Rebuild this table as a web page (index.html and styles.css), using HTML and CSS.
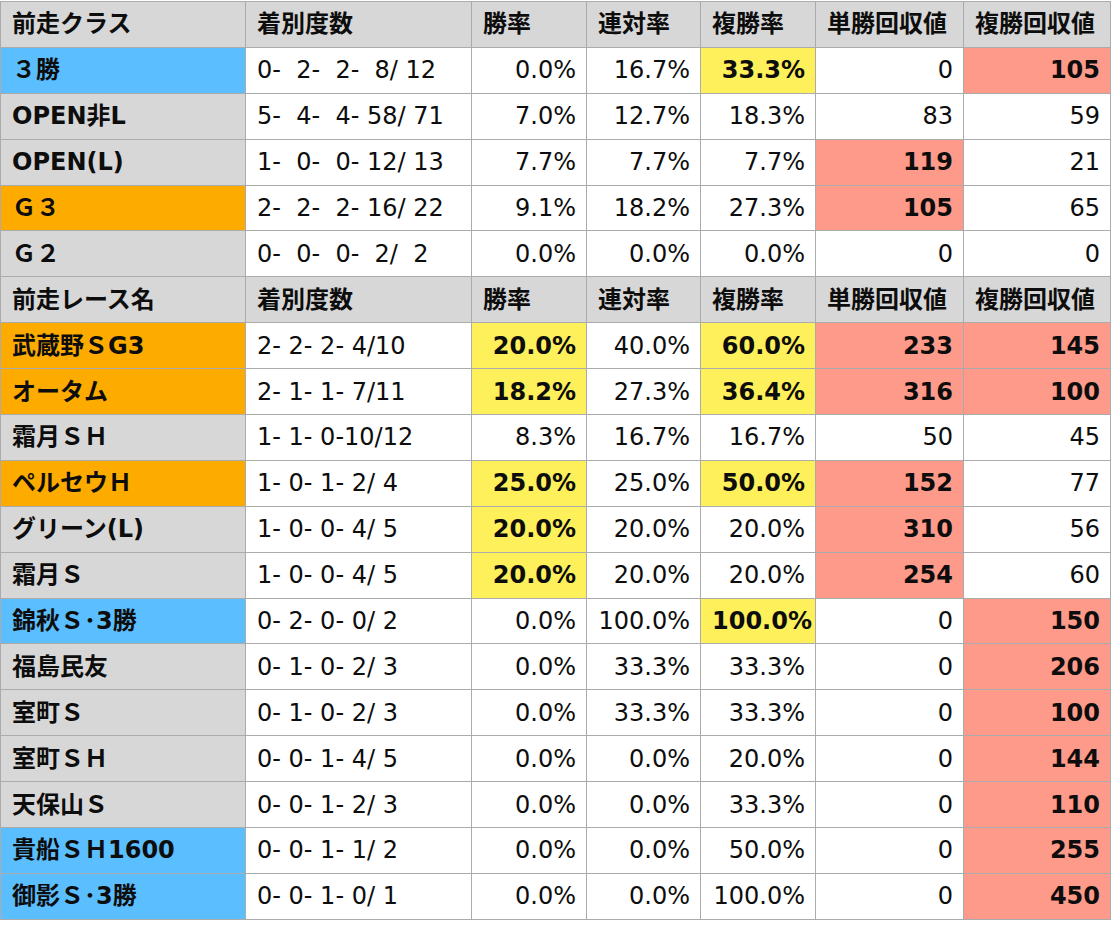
FILE: index.html
```html
<!DOCTYPE html>
<html lang="ja">
<head>
<meta charset="utf-8">
<title>前走クラス</title>
<link rel="stylesheet" href="styles.css">
</head>
<body>
<table class="stats">
<colgroup>
<col class="c1"><col class="c2"><col class="c3"><col class="c4"><col class="c5"><col class="c6"><col class="c7">
</colgroup>
<tbody>
<tr class="head"><th>前走クラス</th><th>着別度数</th><th>勝率</th><th>連対率</th><th>複勝率</th><th>単勝回収値</th><th>複勝回収値</th></tr>
<tr><td class="name blue">３勝</td><td class="rec">0-  2-  2-  8/ 12</td><td class="num">0.0%</td><td class="num">16.7%</td><td class="num yel">33.3%</td><td class="num">0</td><td class="num pink">105</td></tr>
<tr><td class="name">OPEN非L</td><td class="rec">5-  4-  4- 58/ 71</td><td class="num">7.0%</td><td class="num">12.7%</td><td class="num">18.3%</td><td class="num">83</td><td class="num">59</td></tr>
<tr><td class="name">OPEN(L)</td><td class="rec">1-  0-  0- 12/ 13</td><td class="num">7.7%</td><td class="num">7.7%</td><td class="num">7.7%</td><td class="num pink">119</td><td class="num">21</td></tr>
<tr><td class="name orange">Ｇ３</td><td class="rec">2-  2-  2- 16/ 22</td><td class="num">9.1%</td><td class="num">18.2%</td><td class="num">27.3%</td><td class="num pink">105</td><td class="num">65</td></tr>
<tr><td class="name">Ｇ２</td><td class="rec">0-  0-  0-  2/  2</td><td class="num">0.0%</td><td class="num">0.0%</td><td class="num">0.0%</td><td class="num">0</td><td class="num">0</td></tr>
<tr class="head"><th>前走レース名</th><th>着別度数</th><th>勝率</th><th>連対率</th><th>複勝率</th><th>単勝回収値</th><th>複勝回収値</th></tr>
<tr><td class="name orange">武蔵野ＳG3</td><td class="rec">2- 2- 2- 4/10</td><td class="num yel">20.0%</td><td class="num">40.0%</td><td class="num yel">60.0%</td><td class="num pink">233</td><td class="num pink">145</td></tr>
<tr><td class="name orange">オータム</td><td class="rec">2- 1- 1- 7/11</td><td class="num yel">18.2%</td><td class="num">27.3%</td><td class="num yel">36.4%</td><td class="num pink">316</td><td class="num pink">100</td></tr>
<tr><td class="name">霜月ＳＨ</td><td class="rec">1- 1- 0-10/12</td><td class="num">8.3%</td><td class="num">16.7%</td><td class="num">16.7%</td><td class="num">50</td><td class="num">45</td></tr>
<tr><td class="name orange">ペルセウＨ</td><td class="rec">1- 0- 1- 2/ 4</td><td class="num yel">25.0%</td><td class="num">25.0%</td><td class="num yel">50.0%</td><td class="num pink">152</td><td class="num">77</td></tr>
<tr><td class="name">グリーン(L)</td><td class="rec">1- 0- 0- 4/ 5</td><td class="num yel">20.0%</td><td class="num">20.0%</td><td class="num">20.0%</td><td class="num pink">310</td><td class="num">56</td></tr>
<tr><td class="name">霜月Ｓ</td><td class="rec">1- 0- 0- 4/ 5</td><td class="num yel">20.0%</td><td class="num">20.0%</td><td class="num">20.0%</td><td class="num pink">254</td><td class="num">60</td></tr>
<tr><td class="name blue">錦秋Ｓ･3勝</td><td class="rec">0- 2- 0- 0/ 2</td><td class="num">0.0%</td><td class="num">100.0%</td><td class="num yel">100.0%</td><td class="num">0</td><td class="num pink">150</td></tr>
<tr><td class="name">福島民友</td><td class="rec">0- 1- 0- 2/ 3</td><td class="num">0.0%</td><td class="num">33.3%</td><td class="num">33.3%</td><td class="num">0</td><td class="num pink">206</td></tr>
<tr><td class="name">室町Ｓ</td><td class="rec">0- 1- 0- 2/ 3</td><td class="num">0.0%</td><td class="num">33.3%</td><td class="num">33.3%</td><td class="num">0</td><td class="num pink">100</td></tr>
<tr><td class="name">室町ＳＨ</td><td class="rec">0- 0- 1- 4/ 5</td><td class="num">0.0%</td><td class="num">0.0%</td><td class="num">20.0%</td><td class="num">0</td><td class="num pink">144</td></tr>
<tr><td class="name">天保山Ｓ</td><td class="rec">0- 0- 1- 2/ 3</td><td class="num">0.0%</td><td class="num">0.0%</td><td class="num">33.3%</td><td class="num">0</td><td class="num pink">110</td></tr>
<tr><td class="name blue">貴船ＳＨ1600</td><td class="rec">0- 0- 1- 1/ 2</td><td class="num">0.0%</td><td class="num">0.0%</td><td class="num">50.0%</td><td class="num">0</td><td class="num pink">255</td></tr>
<tr><td class="name blue">御影Ｓ･3勝</td><td class="rec">0- 0- 1- 0/ 1</td><td class="num">0.0%</td><td class="num">0.0%</td><td class="num">100.0%</td><td class="num">0</td><td class="num pink">450</td></tr>
</tbody>
</table>
</body>
</html>
```

FILE: styles.css
```css
html, body {
  margin: 0;
  padding: 0;
  background: #ffffff;
}
body {
  padding-top: 1px;
  font-family: "DejaVu Sans", "Noto Sans CJK JP", sans-serif;
  font-size: 24px;
  color: #0d0d0d;
}
.stats {
  border-collapse: collapse;
  table-layout: fixed;
  width: 1111px;
}
.c1 { width: 245px; }
.c2 { width: 226px; }
.c3 { width: 115px; }
.c4 { width: 114px; }
.c5 { width: 115px; }
.c6 { width: 148px; }
.c7 { width: 147px; }
.stats tr {
  height: 45.9px;
}
.stats th, .stats td {
  border: 1px solid #ababab;
  padding: 0 10px 0 11px;
  vertical-align: middle;
  white-space: pre;
  overflow: hidden;
  line-height: 1;
}
.stats th {
  background: #d7d7d7;
  font-weight: bold;
  text-align: left;
}
.name {
  background: #d7d7d7;
  font-weight: bold;
  text-align: left;
}
.rec {
  text-align: left;
  font-weight: normal;
}
.num {
  text-align: right;
}
.blue { background: #5bbefe; }
.orange { background: #feab00; }
.yel { background: #fdf05a; font-weight: bold; }
.pink { background: #fe9a8a; font-weight: bold; }
```
